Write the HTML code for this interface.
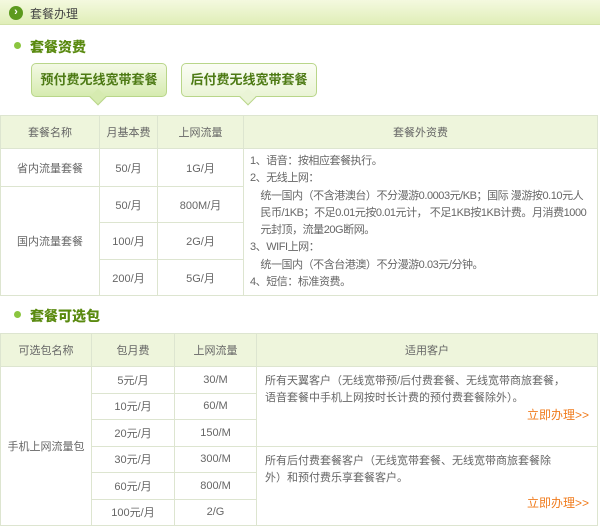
<!DOCTYPE html>
<html><head><meta charset="utf-8"><style>
*{margin:0;padding:0;box-sizing:border-box}
body{width:600px;height:527px;background:#fff;font-family:"Liberation Sans","Noto Sans CJK SC",sans-serif;font-size:11px;color:#555;position:relative;overflow:hidden}
.hdr{position:absolute;left:0;top:0;width:600px;height:25px;background:linear-gradient(#f4f9df,#e0eeb8);border-bottom:1px solid #d2e2a8}
.hdr .ic{position:absolute;left:9px;top:6px;width:14px;height:14px;border-radius:50%;background:#5c9a1e;color:#fff;font-size:11px;line-height:13px;text-align:center;font-weight:bold}
.hdr span{position:absolute;left:30px;top:5px;font-size:12px;color:#444}
.sec{position:absolute;left:14px;font-size:14px;font-weight:bold;color:#5a8a10}
.sec:before{content:"";position:absolute;left:0;top:5px;width:7px;height:7px;border-radius:50%;background:#8bc53f}
.sec b{margin-left:16px}
.btn{position:absolute;top:63px;width:136px;height:34px;border:1px solid #b9d68a;border-radius:5px;font-size:13px;font-weight:bold;color:#4d7a14;text-align:center;line-height:31px}
.btn:after{content:"";position:absolute;left:60px;bottom:-7px;width:11px;height:11px;transform:rotate(45deg);border-right:1px solid #b9d68a;border-bottom:1px solid #b9d68a}
.b1{left:31px;background:linear-gradient(#f3f9e4,#d6ebb0)}.b1:after{background:#d6ebb0}
.b2{left:181px;background:linear-gradient(#fbfdf5,#eaf4d6)}.b2:after{background:#eaf4d6}
table{position:absolute;left:0;border-collapse:collapse;width:598px;table-layout:fixed}
td,th{border:1px solid #dde5d0;text-align:center;font-weight:normal;color:#666;font-size:11px}
th{background:#eef5dc}
.l{text-align:left;padding:4px 6px;line-height:17.3px;vertical-align:top;white-space:nowrap;overflow:visible}
.t1 .l{letter-spacing:-0.45px}
.o{color:#f07c1e;text-align:right;display:block;font-size:12px}
</style></head><body>
<div class="hdr"><div class="ic">›</div><span>套餐办理</span></div>
<div class="sec" style="top:37px"><b>套餐资费</b></div>
<div class="btn b1">预付费无线宽带套餐</div>
<div class="btn b2">后付费无线宽带套餐</div>
<table class="t1" style="top:115px">
<colgroup><col style="width:99px"><col style="width:58px"><col style="width:86px"><col></colgroup>
<tr style="height:33px"><th>套餐名称</th><th>月基本费</th><th>上网流量</th><th>套餐外资费</th></tr>
<tr style="height:38px"><td>省内流量套餐</td><td>50/月</td><td>1G/月</td><td class="l" rowspan="4">1、语音：按相应套餐执行。<br>2、无线上网：<br>&nbsp;&nbsp;&nbsp;&nbsp;统一国内（不含港澳台）不分漫游0.0003元/KB；国际 漫游按0.10元人<br>&nbsp;&nbsp;&nbsp;&nbsp;民币/1KB；不足0.01元按0.01元计， 不足1KB按1KB计费。月消费1000<br>&nbsp;&nbsp;&nbsp;&nbsp;元封顶，流量20G断网。<br>3、WIFI上网：<br>&nbsp;&nbsp;&nbsp;&nbsp;统一国内（不含台港澳）不分漫游0.03元/分钟。<br>4、短信：标准资费。</td></tr>
<tr style="height:35px"><td rowspan="3">国内流量套餐</td><td>50/月</td><td>800M/月</td></tr>
<tr style="height:37px"><td>100/月</td><td>2G/月</td></tr>
<tr style="height:36px"><td>200/月</td><td>5G/月</td></tr>
</table>
<div class="sec" style="top:306px"><b>套餐可选包</b></div>
<table style="top:333px">
<colgroup><col style="width:91px"><col style="width:83px"><col style="width:82px"><col></colgroup>
<tr style="height:33px"><th>可选包名称</th><th>包月费</th><th>上网流量</th><th>适用客户</th></tr>
<tr style="height:26.5px"><td rowspan="6">手机上网流量包</td><td>5元/月</td><td>30/M</td><td class="l" rowspan="3" style="padding:6px 8px;line-height:17px">所有天翼客户（无线宽带预/后付费套餐、无线宽带商旅套餐，<br>语音套餐中手机上网按时长计费的预付费套餐除外）。<span class="o">立即办理&gt;&gt;</span></td></tr>
<tr style="height:26.5px"><td>10元/月</td><td>60/M</td></tr>
<tr style="height:26.5px"><td>20元/月</td><td>150/M</td></tr>
<tr style="height:26.5px"><td>30元/月</td><td>300/M</td><td class="l" rowspan="3" style="padding:6px 8px;line-height:17px">所有后付费套餐客户（无线宽带套餐、无线宽带商旅套餐除<br>外）和预付费乐享套餐客户。<span class="o" style="margin-top:8px">立即办理&gt;&gt;</span></td></tr>
<tr style="height:26.5px"><td>60元/月</td><td>800/M</td></tr>
<tr style="height:26.5px"><td>100元/月</td><td>2/G</td></tr>
</table>
</body></html>
